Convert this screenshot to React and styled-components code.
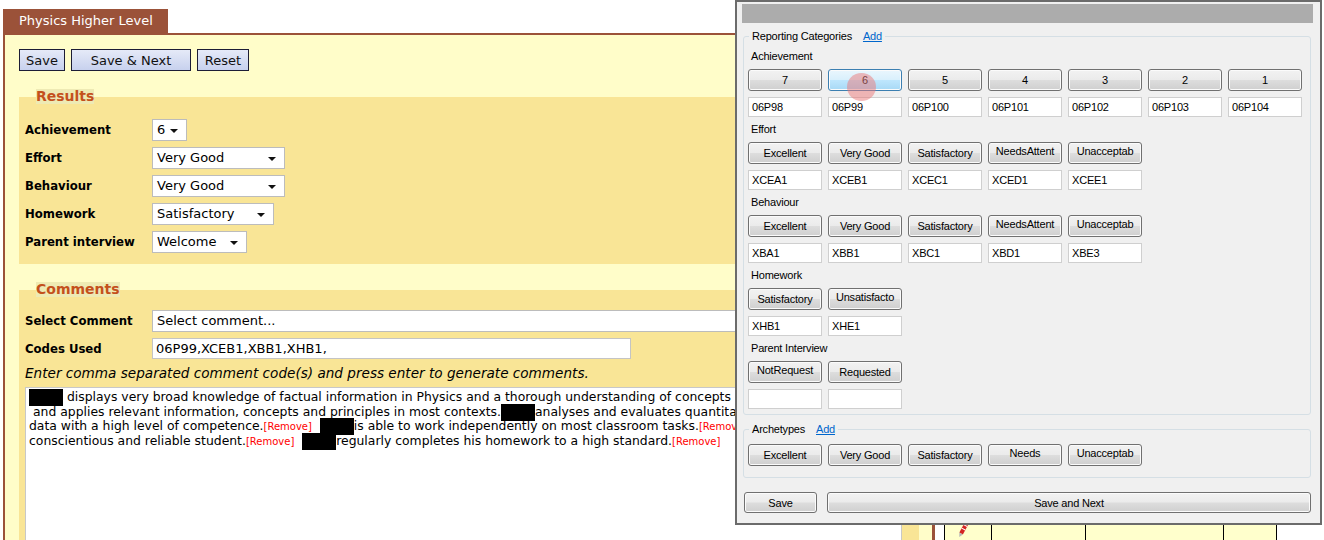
import React from "react";
import styled, { createGlobalStyle } from "styled-components";

const BROWN = "#9b5239";

const GlobalStyle = createGlobalStyle`
  html, body {
    margin: 0;
    padding: 0;
    background: #fff;
    overflow: hidden;
  }
  body {
    font-family: "DejaVu Sans", Verdana, sans-serif;
    color: #000;
  }
`;

const Page = styled.div`
  position: relative;
  display: flex;
  align-items: flex-start;
  height: 540px;
  overflow: hidden;
`;

/* ---------- report card editor ---------- */

const Frame = styled.div`
  flex: none;
  width: 932px;
  margin-left: 3px;
`;

const Tab = styled.div`
  box-sizing: border-box;
  width: 165px;
  height: 24px;
  margin-top: 9px;
  padding-left: 16px;
  background: ${BROWN};
  color: #fff;
  font-size: 13px;
  line-height: 24px;
`;

const Sheet = styled.div`
  height: 620px;
  padding: 14px 13px 0 14px;
  background: #fffdc9;
  border-top: 2px solid ${BROWN};
  border-left: 2px solid ${BROWN};
  border-right: 3px solid ${BROWN};
`;

const Toolbar = styled.div`
  display: flex;
  gap: 6px;
`;

const PageButton = styled.button`
  box-sizing: border-box;
  width: ${(p) => p.$w}px;
  height: 22px;
  padding: 0;
  border: 1px solid #1d1d36;
  background: linear-gradient(#e5eaf8, #c7d1ee);
  font-family: inherit;
  font-size: 13px;
  color: #111;
`;

const Section = styled.fieldset`
  min-width: 0;
  margin: ${(p) => p.$gap}px 0 0;
  padding: ${(p) => p.$top}px 6px 11px 6px;
  border: none;
  background: #f9e596;
`;

const Legend = styled.legend`
  margin-left: 11px;
  padding: 0;
  background: #eeeab4;
  color: #c4501c;
  font-size: 14px;
  font-weight: bold;
  line-height: 15px;
`;

const Rows = styled.div`
  display: grid;
  grid-template-columns: 127px auto;
  row-gap: 6px;
  align-items: center;
  justify-items: start;
`;

const FieldLabel = styled.div`
  font-size: 11.7px;
  font-weight: bold;
`;

const Dropdown = styled.div`
  position: relative;
  box-sizing: border-box;
  width: ${(p) => p.$w}px;
  height: 22px;
  padding-left: 4px;
  background: #fff;
  border: 1px solid #bcbcbc;
  font-size: 13px;
  line-height: 20px;
  white-space: nowrap;

  &::after {
    content: "";
    position: absolute;
    right: 8px;
    top: 9px;
    border-left: 4px solid transparent;
    border-right: 4px solid transparent;
    border-top: 4px solid #111;
  }
`;

const TextField = styled.div`
  box-sizing: border-box;
  width: ${(p) => p.$w}px;
  height: 21px;
  padding-left: 3px;
  background: #fff;
  border: 1px solid #c4c4c4;
  font-size: 13px;
  line-height: 19px;
`;

const Hint = styled.div`
  margin-top: 7px;
  font-size: 13.6px;
  font-style: italic;
  line-height: 15px;
`;

const CommentBox = styled.div`
  box-sizing: border-box;
  width: 877px;
  height: 300px;
  margin-top: 6px;
  padding: 1px 3px;
  background: #fff;
  border: 1px solid #c8c8c8;
  font-size: 12.4px;
  white-space: nowrap;
  overflow: hidden;
`;

const CommentLine = styled.div`
  height: 14.5px;
  line-height: 14.5px;
`;

const Redact = styled.span`
  display: inline-block;
  width: 34px;
  height: 17px;
  background: #000;
  vertical-align: -5px;
`;

const RemoveLink = styled.span`
  color: #f00;
  font-size: 10px;
`;

/* ---------- timetable strip behind the dialog ---------- */

const Backdrop = styled.div`
  flex: 1;
  padding: 500px 0 0 9px;
`;

const Strip = styled.div`
  display: flex;
  height: 80px;
`;

const StripCell = styled.div`
  width: ${(p) => p.$w}px;
  background: #ffffcc;
  border-left: 1px solid #000;

  &:last-child {
    border-right: 1px solid #000;
  }
`;

const Pencil = styled.svg`
  display: block;
  margin: 22px 0 0 11px;
`;

/* ---------- quick comment dialog ---------- */

const Dialog = styled.div`
  position: absolute;
  left: 735px;
  top: 0;
  box-sizing: border-box;
  width: 587px;
  height: 525px;
  display: flex;
  flex-direction: column;
  padding: 2px 7px 0 5px;
  background: #f0f0f0;
  border: 2px solid #6b6b6b;
  font-family: "Liberation Sans", Arial, sans-serif;
  font-size: 11px;
  letter-spacing: -0.2px;
  color: #000;
`;

const TitleBar = styled.div`
  height: 19px;
  background: #acacac;
`;

const Group = styled.fieldset`
  min-width: 0;
  margin: ${(p) => p.$gap}px 2px 0 1px;
  padding: ${(p) => p.$top}px 4px ${(p) => p.$bottom}px 4px;
  border: 1px solid #d5dfe5;
  border-radius: 3px;
`;

const GroupLegend = styled.legend`
  display: flex;
  gap: 11px;
  margin-left: 1px;
  padding: 0 3px;
  line-height: 13px;
`;

const AddLink = styled.span`
  color: #0066cc;
  text-decoration: underline;
`;

const Category = styled.div`
  & + & {
    margin-top: 6px;
  }
`;

const CategoryName = styled.div`
  padding-left: 3px;
  margin-bottom: 6px;
  line-height: 13px;
`;

const ChoiceGrid = styled.div`
  display: grid;
  grid-template-columns: repeat(7, 74px);
  column-gap: 6px;

  & + & {
    margin-top: 6px;
  }
`;

const WinButton = styled.button`
  position: relative;
  box-sizing: border-box;
  width: ${(p) => (p.$w ? `${p.$w}px` : "100%")};
  height: ${(p) => p.$h || 22}px;
  padding: 0 0 ${(p) => (p.$lift ? 4 : 0)}px;
  border: 1px solid ${(p) => (p.$active ? "#3c7fb1" : "#707070")};
  border-radius: 3px;
  background: ${(p) =>
    p.$active
      ? "linear-gradient(#eaf6fd 0%, #d9f0fc 48%, #bee6fd 52%, #a7d9f5 100%)"
      : "linear-gradient(#f2f2f2 0%, #ebebeb 48%, #dddddd 52%, #cfcfcf 100%)"};
  box-shadow: inset 0 0 0 1px #fbfbfb;
  font-family: inherit;
  font-size: 11px;
  letter-spacing: -0.2px;
  color: #000;
  white-space: nowrap;
  overflow: visible;
`;

const ClickMark = styled.span`
  position: absolute;
  left: 18px;
  top: 3px;
  width: 29px;
  height: 28px;
  border-radius: 50%;
  background: rgba(236, 120, 120, 0.5);
`;

const CodeBox = styled.div`
  box-sizing: border-box;
  height: 20px;
  padding-left: 3px;
  background: #fff;
  border: 1px solid #cfcfcf;
  line-height: 18px;
`;

const DialogActions = styled.div`
  display: flex;
  gap: 10px;
  margin: 14px 1px 0 2px;
`;

const categories = [
  {
    name: "Achievement",
    choices: ["7", "6", "5", "4", "3", "2", "1"],
    codes: ["06P98", "06P99", "06P100", "06P101", "06P102", "06P103", "06P104"],
    active: "6",
  },
  {
    name: "Effort",
    choices: ["Excellent", "Very Good", "Satisfactory", "NeedsAttent", "Unacceptab"],
    codes: ["XCEA1", "XCEB1", "XCEC1", "XCED1", "XCEE1"],
  },
  {
    name: "Behaviour",
    choices: ["Excellent", "Very Good", "Satisfactory", "NeedsAttent", "Unacceptab"],
    codes: ["XBA1", "XBB1", "XBC1", "XBD1", "XBE3"],
  },
  {
    name: "Homework",
    choices: ["Satisfactory", "Unsatisfacto"],
    codes: ["XHB1", "XHE1"],
  },
  {
    name: "Parent Interview",
    choices: ["NotRequest", "Requested"],
    codes: ["", ""],
  },
];

// labels that got clipped by the WinForms button sit a little higher
const lifted = ["NeedsAttent", "Unacceptab", "Unsatisfacto", "NotRequest", "Needs"];

const results = [
  { label: "Achievement", value: "6", w: 35 },
  { label: "Effort", value: "Very Good", w: 133 },
  { label: "Behaviour", value: "Very Good", w: 133 },
  { label: "Homework", value: "Satisfactory", w: 122 },
  { label: "Parent interview", value: "Welcome", w: 95 },
];

const archetypes = ["Excellent", "Very Good", "Satisfactory", "Needs", "Unacceptab"];

function Remove() {
  return <RemoveLink>[Remove]</RemoveLink>;
}

function QuickComments() {
  return (
    <Dialog>
      <TitleBar />
      <Group $gap={7} $top={7} $bottom={5}>
        <GroupLegend>
          <span>Reporting Categories</span>
          <AddLink>Add</AddLink>
        </GroupLegend>
        {categories.map((cat) => (
          <Category key={cat.name}>
            <CategoryName>{cat.name}</CategoryName>
            <ChoiceGrid>
              {cat.choices.map((c) => (
                <WinButton key={c} $active={c === cat.active} $lift={lifted.includes(c)}>
                  {c}
                  {c === cat.active && <ClickMark />}
                </WinButton>
              ))}
            </ChoiceGrid>
            <ChoiceGrid>
              {cat.codes.map((code, i) => (
                <CodeBox key={i}>{code}</CodeBox>
              ))}
            </ChoiceGrid>
          </Category>
        ))}
      </Group>
      <Group $gap={8} $top={8} $bottom={11}>
        <GroupLegend>
          <span>Archetypes</span>
          <AddLink>Add</AddLink>
        </GroupLegend>
        <ChoiceGrid>
          {archetypes.map((a) => (
            <WinButton key={a} $lift={lifted.includes(a)}>
              {a}
            </WinButton>
          ))}
        </ChoiceGrid>
      </Group>
      <DialogActions>
        <WinButton $w={73} $h={21}>
          Save
        </WinButton>
        <WinButton $w={484} $h={21}>
          Save and Next
        </WinButton>
      </DialogActions>
    </Dialog>
  );
}

export default function App() {
  return (
    <>
      <GlobalStyle />
      <Page>
        <Frame>
          <Tab>Physics Higher Level</Tab>
          <Sheet>
            <Toolbar>
              <PageButton $w={46}>Save</PageButton>
              <PageButton $w={120}>Save &amp; Next</PageButton>
              <PageButton $w={52}>Reset</PageButton>
            </Toolbar>

            <Section $gap={18} $top={15}>
              <Legend>Results</Legend>
              <Rows>
                {results.map((r) => (
                  <React.Fragment key={r.label}>
                    <FieldLabel>{r.label}</FieldLabel>
                    <Dropdown $w={r.w}>{r.value}</Dropdown>
                  </React.Fragment>
                ))}
              </Rows>
            </Section>

            <Section $gap={18} $top={13}>
              <Legend>Comments</Legend>
              <Rows>
                <FieldLabel>Select Comment</FieldLabel>
                <Dropdown $w={740}>Select comment...</Dropdown>
                <FieldLabel>Codes Used</FieldLabel>
                <TextField $w={479}>06P99,XCEB1,XBB1,XHB1,</TextField>
              </Rows>
              <Hint>Enter comma separated comment code(s) and press enter to generate comments.</Hint>
              <CommentBox>
                <CommentLine>
                  <Redact /> displays very broad knowledge of factual information in Physics and a
                  thorough understanding of concepts
                </CommentLine>
                <CommentLine>
                  &nbsp;and applies relevant information, concepts and principles in most contexts.
                  <Redact />
                  analyses and evaluates quantitative
                </CommentLine>
                <CommentLine>
                  data with a high level of competence.<Remove />
                  &nbsp;&nbsp;
                  <Redact />
                  is able to work independently on most classroom tasks.<Remove /> He is a
                </CommentLine>
                <CommentLine>
                  conscientious and reliable student.<Remove />
                  &nbsp;&nbsp;
                  <Redact />
                  regularly completes his homework to a high standard.<Remove />
                </CommentLine>
              </CommentBox>
            </Section>
          </Sheet>
        </Frame>

        <Backdrop>
          <Strip>
            <StripCell $w={46}>
              <Pencil width="14" height="16" viewBox="0 0 14 16">
                <g transform="rotate(28 7 8)">
                  <rect x="5" y="0" width="4" height="12" fill="#d42424" />
                  <line x1="5" y1="3" x2="9" y2="3" stroke="#fff" strokeWidth="1" />
                  <line x1="5" y1="7" x2="9" y2="7" stroke="#fff" strokeWidth="1" />
                  <polygon points="5,12 9,12 7,16" fill="#b8b8b8" />
                </g>
              </Pencil>
            </StripCell>
            <StripCell $w={93} />
            <StripCell $w={137} />
            <StripCell $w={52} />
          </Strip>
        </Backdrop>

        <QuickComments />
      </Page>
    </>
  );
}
